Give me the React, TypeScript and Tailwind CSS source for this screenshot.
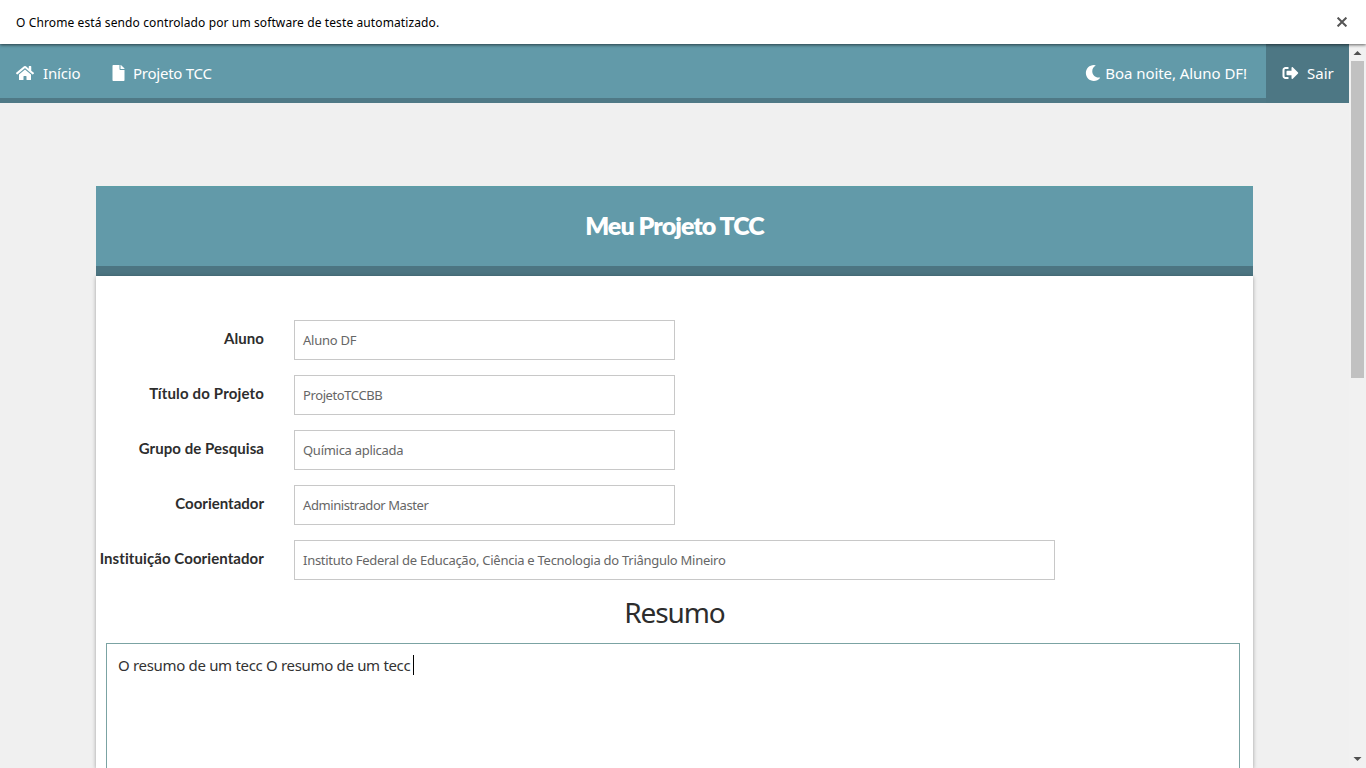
import { FaFile, FaHome, FaMoon, FaSignOutAlt } from 'react-icons/fa';

type Field = { label: string; value: string; labelClass: string; valueClass: string; boxClass: string };

const fields: Field[] = [
  { label: 'Aluno', value: 'Aluno DF', labelClass: 'tracking-[0.05px]', valueClass: 'tracking-[-0.25px]', boxClass: 'w-[381px]' },
  { label: 'Título do Projeto', value: 'ProjetoTCCBB', labelClass: 'tracking-[0.16px]', valueClass: 'tracking-[-0.4px]', boxClass: 'w-[381px]' },
  { label: 'Grupo de Pesquisa', value: 'Química aplicada', labelClass: 'tracking-[0.06px]', valueClass: 'tracking-[-0.28px]', boxClass: 'w-[381px]' },
  { label: 'Coorientador', value: 'Administrador Master', labelClass: 'tracking-[0px]', valueClass: 'tracking-[-0.42px]', boxClass: 'w-[381px]' },
  {
    label: 'Instituição Coorientador',
    value: 'Instituto Federal de Educação, Ciência e Tecnologia do Triângulo Mineiro',
    labelClass: 'tracking-[0.08px]',
    valueClass: 'tracking-[-0.27px]',
    boxClass: 'w-[761px]',
  },
];

function InfoBar() {
  return (
    <div className="relative z-10 flex h-11 shrink-0 items-center justify-between bg-white pr-[19px] pl-4 shadow-[0_1px_3px_rgba(0,0,0,0.6)]">
      <span className="pt-px text-[12px] leading-4 tracking-[0.11px] text-black">
        O Chrome está sendo controlado por um software de teste automatizado.
      </span>
      <svg className="size-[10px]" viewBox="0 0 10 10" fill="none" stroke="#555" strokeWidth="2">
        <path d="M0.6 0.6 9.4 9.4M9.4 0.6 0.6 9.4" />
      </svg>
    </div>
  );
}

function NavBar() {
  return (
    <nav className="flex h-[59px] border-b-[5px] border-[#4f7986] bg-[#629aa9] pl-4 text-[15px] leading-5 text-white">
      <a className="flex w-24 items-center gap-[9px] pt-1">
        <FaHome className="h-4 w-[18px]" />
        <span className="tracking-[-0.15px]">Início</span>
      </a>
      <a className="flex items-center gap-2 pt-1">
        <FaFile className="h-4 w-[13px]" />
        <span className="tracking-[-0.25px]">Projeto TCC</span>
      </a>
      <div className="ml-auto flex items-center gap-1 pt-1 pr-[19px]">
        <FaMoon className="size-4" />
        <span className="tracking-[-0.06px]">Boa noite, Aluno DF!</span>
      </div>
      <a className="-mb-[5px] flex w-[83px] items-center gap-2 bg-[#4d7784] pb-px pl-4">
        <FaSignOutAlt className="h-4 w-[17px]" />
        <span>Sair</span>
      </a>
    </nav>
  );
}

function FieldRow({ field }: { field: Field }) {
  return (
    <div className="flex h-10 gap-[30px]">
      <label className={`w-[168px] shrink-0 pt-2 text-right font-['Lato',sans-serif] text-[15px] leading-5 font-bold whitespace-nowrap text-[#2d2d2d] [font-variant-ligatures:none] ${field.labelClass}`}>
        {field.label}
      </label>
      <div className={`flex items-center border border-[#c8c8c8] px-2 text-[13px] leading-5 whitespace-nowrap text-[#666] ${field.boxClass} ${field.valueClass}`}>
        {field.value}
      </div>
    </div>
  );
}

function ProjectCard() {
  return (
    <main className="mx-24 mt-[83px] flex min-h-0 flex-1 flex-col">
      <header className="flex h-[90px] shrink-0 items-center justify-center border-t border-b-[10px] border-t-[#5d9ea6] border-b-[#4c7582] bg-[#629aa9] pb-[3px]">
        <h1 className="font-['Lato',sans-serif] text-[25px] leading-8 font-extrabold tracking-[-0.95px] text-white">Meu Projeto TCC</h1>
      </header>
      <section className="flex min-h-0 flex-1 flex-col bg-white shadow-[0_1px_4px_rgba(0,0,0,0.35)]">
        <div className="flex flex-col gap-[15px] pt-11">
          {fields.map((field) => (
            <FieldRow key={field.label} field={field} />
          ))}
        </div>
        <h2 className="mt-3 text-center text-[28px] leading-10 tracking-[-1.1px] text-[#2d2d2d]">Resumo</h2>
        <div className="mt-[11px] mr-[13px] ml-[10px] flex flex-1 items-start border border-b-0 border-[#7ba3a3] py-[11px] pl-[11px] text-[15px] leading-5 tracking-[-0.32px] text-[#333]">
          <span>O resumo de um tecc O resumo de um tecc</span>
          <span className="ml-[3px] h-5 w-px bg-black" />
        </div>
      </section>
    </main>
  );
}

function ScrollBar() {
  return (
    <div className="flex w-[17px] shrink-0 flex-col items-center justify-between bg-[#f1f1f1]">
      <div className="flex flex-col items-center">
        <svg className="h-[17px] w-[17px]" viewBox="0 0 17 17" fill="#505050">
          <path d="M4.5 11 8.5 7l4 4z" />
        </svg>
        <div className="h-[317px] w-[13px] bg-[#c1c1c1]" />
      </div>
      <svg className="h-[17px] w-[17px]" viewBox="0 0 17 17" fill="#505050">
        <path d="M4.5 6h8l-4 4z" />
      </svg>
    </div>
  );
}

export default function App() {
  return (
    <div className="flex h-screen flex-col overflow-hidden bg-[#f0f0f0] font-['Noto_Sans',sans-serif]">
      <InfoBar />
      <div className="flex min-h-0 flex-1">
        <div className="flex min-w-0 flex-1 flex-col">
          <NavBar />
          <ProjectCard />
        </div>
        <ScrollBar />
      </div>
    </div>
  );
}
